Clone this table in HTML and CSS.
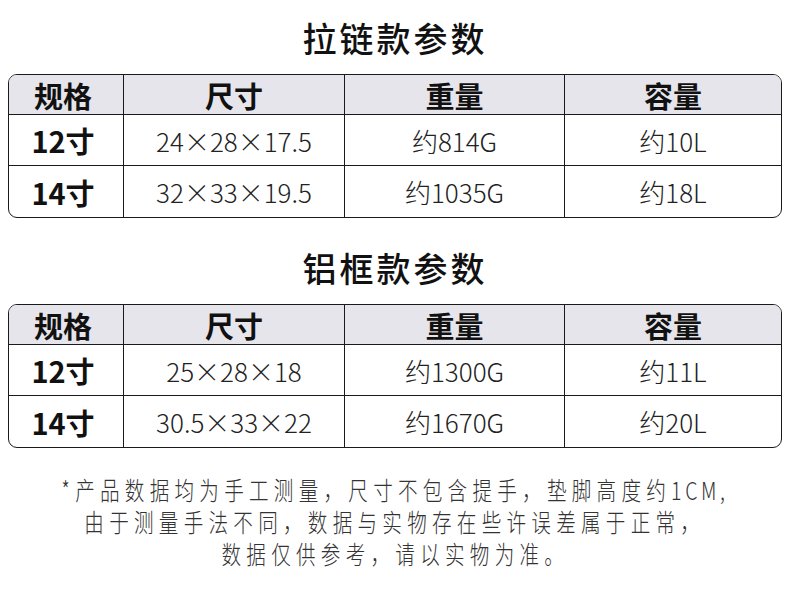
FILE: index.html
```html
<!DOCTYPE html>
<html lang="zh-CN">
<head>
<meta charset="utf-8">
<link rel="stylesheet" href="styles.css">
</head>
<body>
<div class="page">
  <h1 class="title first">拉链款参数</h1>
  <div class="table">
    <div class="cell head first-col">规格</div>
    <div class="cell head">尺寸</div>
    <div class="cell head">重量</div>
    <div class="cell head last">容量</div>
    <div class="cell label first-col">12寸</div>
    <div class="cell data">24×28×17.5</div>
    <div class="cell data">约814G</div>
    <div class="cell data last">约10L</div>
    <div class="cell label first-col bottom">14寸</div>
    <div class="cell data bottom">32×33×19.5</div>
    <div class="cell data bottom">约1035G</div>
    <div class="cell data bottom last">约18L</div>
  </div>

  <h1 class="title second">铝框款参数</h1>
  <div class="table">
    <div class="cell head first-col">规格</div>
    <div class="cell head">尺寸</div>
    <div class="cell head">重量</div>
    <div class="cell head last">容量</div>
    <div class="cell label first-col">12寸</div>
    <div class="cell data">25×28×18</div>
    <div class="cell data">约1300G</div>
    <div class="cell data last">约11L</div>
    <div class="cell label first-col bottom">14寸</div>
    <div class="cell data bottom">30.5×33×22</div>
    <div class="cell data bottom">约1670G</div>
    <div class="cell data bottom last">约20L</div>
  </div>

  <div class="note">
    <p class="line"><span>*产品数据均为手工测量，尺寸不包含提手，垫脚高度约<span class="latin">1CM,</span></span></p>
    <p class="line"><span>由于测量手法不同，数据与实物存在些许误差属于正常，</span></p>
    <p class="line"><span>数据仅供参考，请以实物为准。</span></p>
  </div>
</div>
</body>
</html>
```

FILE: styles.css
```css
html, body {
  margin: 0;
  padding: 0;
  background: #ffffff;
}

.page {
  width: 790px;
  font-family: "Noto Sans CJK SC", "Noto Sans", sans-serif;
  color: #111;
}

.title {
  margin: 0;
  height: 72px;
  line-height: 72px;
  text-align: center;
  font-size: 34px;
  font-weight: 500;
  letter-spacing: 3px;
  color: #111;
}

.title.first {
  margin-top: 2px;
}

.title.second {
  margin-top: 14px;
}

.table {
  margin: 0 8px;
  display: grid;
  grid-template-columns: 115px 221px 220px 1fr;
  grid-template-rows: 40px 51px 51px;
  border: 1.5px solid #1a1a1a;
  border-radius: 9px;
  overflow: hidden;
}

.cell {
  display: flex;
  align-items: center;
  justify-content: center;
  border-right: 1.5px solid #1a1a1a;
  border-bottom: 1.5px solid #1a1a1a;
}

.cell.first-col {
  padding-right: 6px;
}

.cell.last {
  border-right: none;
}

.cell.bottom {
  border-bottom: none;
}

.head {
  background: #e6e5eb;
  font-size: 29px;
  font-weight: 700;
  color: #111;
}

.label {
  font-size: 29px;
  font-weight: 700;
  color: #111;
}

.data {
  font-size: 26px;
  font-weight: 300;
  color: #222;
}

.note {
  margin-top: 25px;
  color: #333;
}

.line {
  margin: 0;
  height: 32px;
  display: flex;
  justify-content: center;
  align-items: center;
  white-space: nowrap;
}

.line > span {
  display: block;
  flex: none;
  font-size: 22px;
  line-height: 32px;
  font-weight: 300;
  letter-spacing: 5.9px;
  transform: scale(0.89, 1.14);
  transform-origin: center;
}

.line .latin {
  letter-spacing: 4px;
}
```
